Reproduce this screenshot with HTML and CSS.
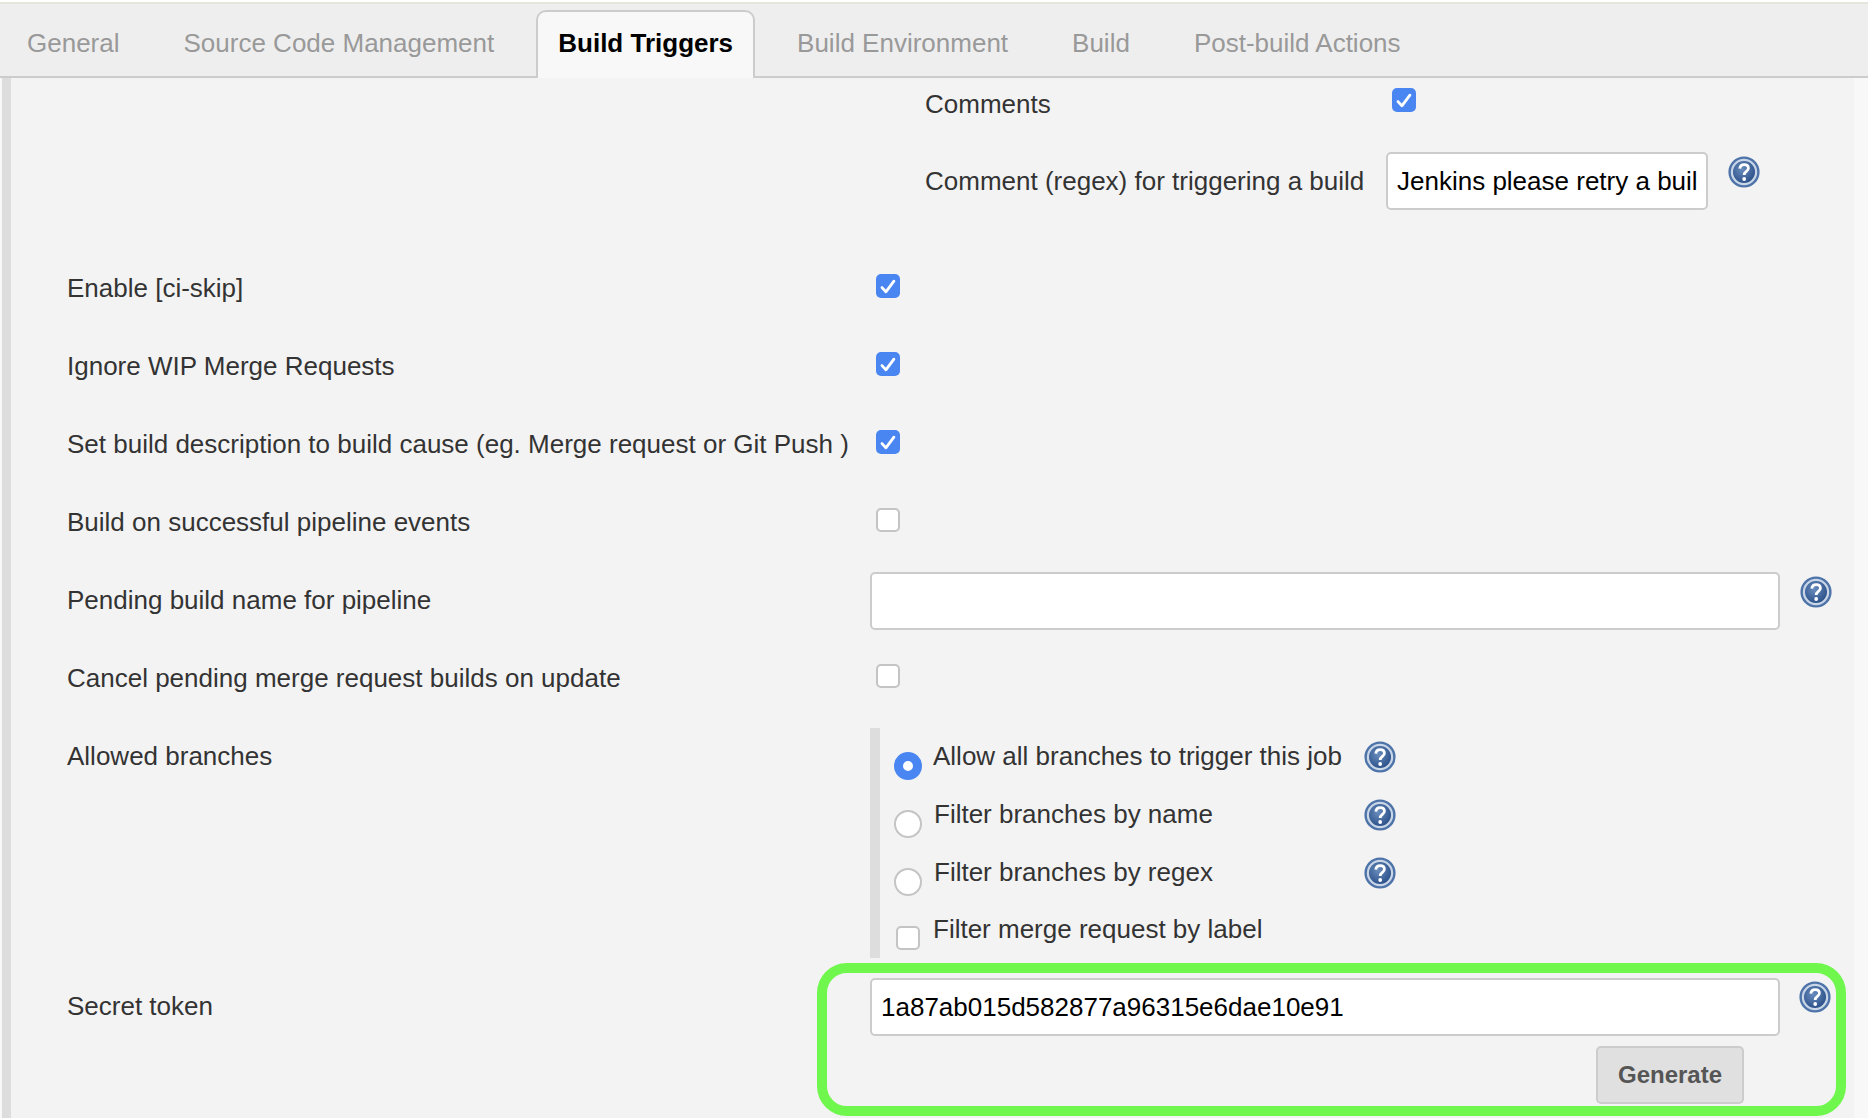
FILE: index.html
```html
<!DOCTYPE html>
<html lang="en">
<head>
<meta charset="utf-8">
<title>Build Triggers</title>
<link rel="stylesheet" href="styles.css">
</head>
<body>
<svg class="defs" aria-hidden="true">
  <defs>
    <radialGradient id="helpfill" cx="42%" cy="38%" r="70%">
      <stop offset="0" stop-color="#6a8cbd"/>
      <stop offset="1" stop-color="#264c85"/>
    </radialGradient>
    <filter id="soft" x="-10%" y="-10%" width="120%" height="120%">
      <feGaussianBlur stdDeviation="0.55"/>
    </filter>
    <symbol id="help" viewBox="0 0 32 32">
      <g filter="url(#soft)">
        <circle cx="16" cy="16" r="15.6" fill="#4d73a9"/>
        <circle cx="16" cy="16" r="13.2" fill="#c9d6e7"/>
        <circle cx="16" cy="16" r="11" fill="url(#helpfill)"/>
        <path d="M11.8 12.6c.3-2.7 2.1-4 4.4-4 2.5 0 4.2 1.5 4.2 3.6 0 3.2-4.2 3.2-4.2 6.8" fill="none" stroke="#fff" stroke-width="2.8"/>
        <circle cx="16.2" cy="23" r="1.9" fill="#fff"/>
      </g>
    </symbol>
    <symbol id="tick" viewBox="0 0 24 24">
      <path d="M6 13.6l3.9 4.2 8-10.6" fill="none" stroke="#fff" stroke-width="2.8" stroke-linecap="round" stroke-linejoin="round"/>
    </symbol>
  </defs>
</svg>

<div class="topline"></div>
<nav class="tabs">
  <a class="tab">General</a>
  <a class="tab">Source Code Management</a>
  <a class="tab tab-active">Build Triggers</a>
  <a class="tab">Build Environment</a>
  <a class="tab">Build</a>
  <a class="tab">Post-build Actions</a>
</nav>

<main class="content">
  <section class="nested">
    <div class="nested-row nested-comments">
      <span class="nested-label">Comments</span>
      <span class="box box-on nested-box"><svg><use href="#tick"/></svg></span>
    </div>
    <div class="nested-row nested-regex">
      <span class="nested-label">Comment (regex) for triggering a build</span>
      <input class="text text-regex" type="text" value="Jenkins please retry a build">
      <svg class="help help-regex"><use href="#help"/></svg>
    </div>
  </section>

  <div class="row"><span class="label">Enable [ci-skip]</span><div class="field"><span class="box box-on"><svg><use href="#tick"/></svg></span></div></div>
  <div class="row"><span class="label">Ignore WIP Merge Requests</span><div class="field"><span class="box box-on"><svg><use href="#tick"/></svg></span></div></div>
  <div class="row"><span class="label">Set build description to build cause (eg. Merge request or Git Push )</span><div class="field"><span class="box box-on"><svg><use href="#tick"/></svg></span></div></div>
  <div class="row"><span class="label">Build on successful pipeline events</span><div class="field"><span class="box"></span></div></div>
  <div class="row"><span class="label">Pending build name for pipeline</span><div class="field field-input"><input class="text text-wide" type="text"><svg class="help"><use href="#help"/></svg></div></div>
  <div class="row"><span class="label">Cancel pending merge request builds on update</span><div class="field"><span class="box"></span></div></div>

  <div class="row row-branches">
    <span class="label">Allowed branches</span>
    <div class="options">
      <div class="option">
        <span class="radio radio-on"></span>
        <span class="option-text option-text-first">Allow all branches to trigger this job</span>
        <svg class="help"><use href="#help"/></svg>
      </div>
      <div class="option">
        <span class="radio"></span>
        <span class="option-text">Filter branches by name</span>
        <svg class="help"><use href="#help"/></svg>
      </div>
      <div class="option option-third">
        <span class="radio"></span>
        <span class="option-text">Filter branches by regex</span>
        <svg class="help"><use href="#help"/></svg>
      </div>
      <div class="option option-last">
        <span class="box box-option"></span>
        <span class="option-text option-text-first">Filter merge request by label</span>
      </div>
    </div>
  </div>

  <div class="row row-token">
    <span class="label label-token">Secret token</span>
    <div class="field-token">
      <div class="token-line">
        <input class="text text-wide" type="text" value="1a87ab015d582877a96315e6dae10e91">
        <svg class="help help-token"><use href="#help"/></svg>
      </div>
      <button class="generate" type="button">Generate</button>
    </div>
    <div class="highlight"></div>
  </div>
</main>
</body>
</html>
```
FILE: styles.css
```css
* { box-sizing: border-box; }

html, body { margin: 0; height: 100%; }

body {
  background: #f8f8f8;
  color: #333;
  font-family: "Liberation Sans", Arial, sans-serif;
  font-size: 26px;
  overflow: hidden;
}

.defs { display: block; width: 0; height: 0; }

.topline { height: 4px; background: #fff; border-bottom: 2px solid #e3e6dc; }

.tabs {
  display: flex;
  align-items: flex-end;
  height: 74px;
  padding-left: 5px;
  background: #eee;
  border-bottom: 2px solid #ccc;
}

.tab {
  padding: 0 20px;
  margin-right: 20px;
  height: 65px;
  line-height: 60px;
  color: #999;
  border: 2px solid transparent;
  border-bottom: 0;
  white-space: nowrap;
}

.tab-active {
  position: relative;
  top: 2px;
  height: 68px;
  line-height: 62px;
  color: #000;
  font-weight: bold;
  background: #f8f8f8;
  border-color: #ccc;
  border-radius: 10px 10px 0 0;
}

.content {
  width: 1852px;
  height: 1040px;
  margin-left: 2px;
  padding-left: 56px;
  background: #f3f3f3;
  border-left: 9px solid #ddd;
}

.nested { height: 171px; padding-left: 858px; }

.nested-row { display: flex; align-items: flex-start; }

.nested-comments { height: 74px; }
.nested-regex { height: 97px; }

.nested-label { width: 461px; line-height: 52px; }
.nested-regex .nested-label { line-height: 58px; }

.nested-box { margin: 10px 0 0 6px; }

.text {
  height: 58px;
  padding: 0 9px;
  color: #000;
  background: #fff;
  border: 2px solid #ccc;
  border-radius: 5px;
  font: 26px "Liberation Sans", Arial, sans-serif;
  outline: none;
}

.text-regex { width: 322px; }
.text-wide { width: 910px; }

.help { display: block; flex: none; width: 32px; height: 32px; }
.help-regex { margin: 4px 0 0 20px; }

.row {
  display: flex;
  align-items: flex-start;
  height: 78px;
}

.label { flex: none; width: 803px; line-height: 79px; }
.label-token { line-height: 77px; }

.field { flex: none; padding: 25px 0 0 6px; }

.field-input { display: flex; padding: 11px 0 0 0; }
.field-input .help { margin: 4px 0 0 20px; }

.box {
  display: block;
  flex: none;
  width: 24px;
  height: 24px;
  background: #fff;
  border: 2px solid #c4c4c4;
  border-radius: 5px;
}

.box svg { display: block; width: 24px; height: 24px; }

.box-on { background: #4a86f2; border: 0; }

.row-branches { height: 251px; }

.options {
  width: 526px;
  height: 230px;
  margin-top: 11px;
  padding: 13px 0 0 14px;
  border-left: 10px solid #ddd;
}

.option { display: flex; align-items: flex-start; height: 58px; }
.option-third { height: 55px; }
.option-last { height: 40px; }

.radio {
  display: block;
  flex: none;
  width: 28px;
  height: 28px;
  margin-top: 11px;
  background: #fff;
  border: 2px solid #c4c4c4;
  border-radius: 50%;
}

.radio-on { background: #fff; border: 9.5px solid #4a86f2; }

.option-text { flex: 1; margin-left: 12px; line-height: 30px; }
.option-text-first { margin-left: 11px; }

.box-option { margin: 14px 0 0 2px; }
.option-last .option-text { margin: 2px 0 0 13px; }

.row-token { position: relative; height: 150px; }

.field-token { display: flex; flex-direction: column; align-items: flex-end; width: 910px; padding-top: 10px; }

.token-line { display: flex; width: 910px; margin-bottom: 10px; position: relative; }
.help-token { position: absolute; left: 929px; top: 3px; }

.generate {
  width: 148px;
  height: 58px;
  margin-right: 36px;
  padding: 0;
  color: #555;
  background: #e0e0e0;
  border: 2px solid #ccc;
  border-radius: 5px;
  font: bold 24px "Liberation Sans", Arial, sans-serif;
}

.highlight {
  position: absolute;
  left: 750px;
  top: -5px;
  width: 1029px;
  height: 153px;
  border: 10px solid #70f74d;
  border-radius: 30px;
  pointer-events: none;
}
```
